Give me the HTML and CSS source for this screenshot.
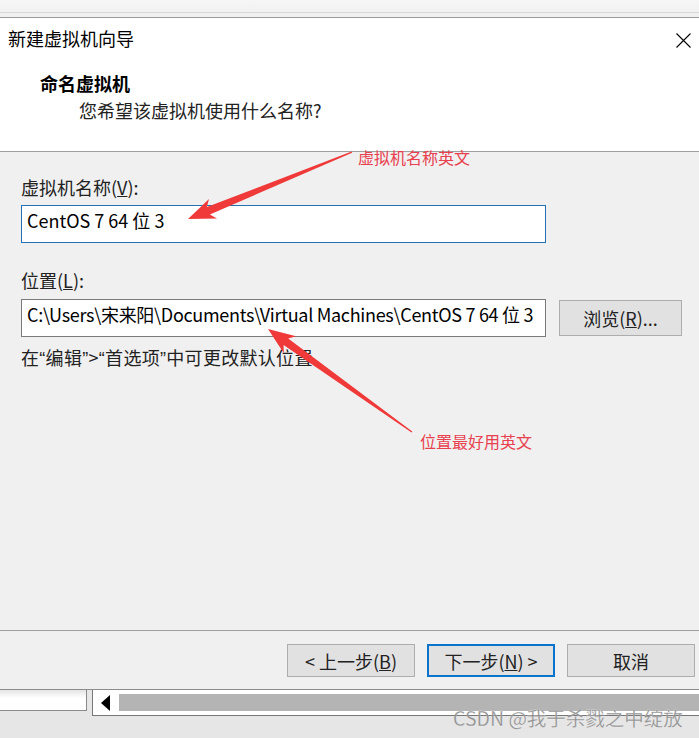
FILE: index.html
```html
<!DOCTYPE html>
<html lang="zh-CN">
<head>
<meta charset="utf-8">
<title>新建虚拟机向导</title>
<link rel="stylesheet" href="styles.css">
</head>
<body>
<div class="page">
  <div class="topstrip"><div class="topline"></div></div>
  <div class="dialog">
    <div class="titlebar">
      <span class="title">新建虚拟机向导</span>
      <svg class="close" width="15" height="15" viewBox="0 0 15 15"><path d="M0.5 0.5 L14.5 14.5 M14.5 0.5 L0.5 14.5" stroke="#000" stroke-width="1.1" fill="none"/></svg>
    </div>
    <div class="header">
      <div class="h-title">命名虚拟机</div>
      <div class="h-sub">您希望该虚拟机使用什么名称?</div>
    </div>
    <div class="body">
      <div class="label">虚拟机名称(<u>V</u>):</div>
      <div class="row">
        <div class="input focused">CentOS 7 64 位 3</div>
      </div>
      <div class="label label2">位置(<u>L</u>):</div>
      <div class="row">
        <div class="input plain">C:\Users\宋来阳\Documents\Virtual Machines\CentOS 7 64 位 3</div>
        <div class="btn browse">浏览(<u>R</u>)...</div>
      </div>
      <div class="hint">在<span class="q">“</span>编辑<span class="q">”</span>&gt;<span class="q">“</span>首选项<span class="q">”</span>中可更改默认位置。</div>
    </div>
    <div class="footer">
      <div class="btn fbtn">&lt; 上一步(<u>B</u>)</div>
      <div class="btn fbtn default">下一步(<u>N</u>) &gt;</div>
      <div class="btn fbtn">取消</div>
    </div>
  </div>
  <div class="under">
    <div class="whitebox"></div>
    <div class="scrollbar">
      <div class="sarrow"><svg width="9" height="16" viewBox="0 0 9 16"><path d="M9 0 L0 8 L9 16 Z" fill="#000"/></svg></div>
      <div class="thumb"></div>
    </div>
  </div>

  <svg class="arrows" width="699" height="738" viewBox="0 0 699 738">
    <polygon transform="translate(188,219) rotate(157.8)" fill="#f03a3a" points="0,0 -27,-10.5 -22,-4 -177,-0.6 -177,0.6 -22,4 -27,10.5"/>
    <polygon transform="translate(268,329) rotate(-144.4)" fill="#f03a3a" points="0,0 -27,-10.5 -22,-4 -177,-0.6 -177,0.6 -22,4 -27,10.5"/>
  </svg>
  <div class="note note1">虚拟机名称英文</div>
  <div class="note note2">位置最好用英文</div>
  <div class="watermark">CSDN @我于杀戮之中绽放</div>
</div>
</body>
</html>
```

FILE: styles.css
```css
* { box-sizing: border-box; }
html, body { margin: 0; padding: 0; }
body {
  background: #e6e6e6;
  font-family: "Noto Sans CJK SC", "Noto Sans", sans-serif;
  color: #111;
  width: 699px;
  height: 738px;
  overflow: hidden;
}
.page { position: relative; width: 699px; height: 738px; }
.topstrip {
  height: 18px;
  background: linear-gradient(#f6f6f6, #efefef);
  border-bottom: 1px solid #9a9a9a;
  padding-top: 12px;
}
.topline { height: 1px; background: #d6d6d6; }
.dialog { background: #fff; }
.titlebar {
  height: 44px;
  display: flex;
  align-items: center;
  justify-content: space-between;
  padding: 0 8px 4px 8px;
}
.title { font-size: 18px; line-height: 24px; color: #000; }
.close { display: block; margin-top: 4px; }
.header {
  padding: 9px 0 29px 40px;
  border-bottom: 1px solid #a0a0a0;
}
.h-title { font-size: 18px; font-weight: bold; line-height: 24px; color: #000; }
.h-sub { font-size: 18px; line-height: 24px; margin-top: 3px; padding-left: 39px; color: #222; }
.body {
  background: #f0f0f0;
  height: 478px;
  padding: 23px 0 0 21px;
}
.label { font-size: 18px; line-height: 24px; color: #222; margin-bottom: 6px; }
.label2 { margin-top: 25px; margin-bottom: 7px; }
.row { display: flex; align-items: center; gap: 13px; }
.input {
  width: 525px;
  height: 38px;
  background: #fff;
  font-size: 18px;
  line-height: 28px;
  padding-left: 5px;
  white-space: nowrap;
  overflow: hidden;
  color: #000;
}
.focused { border: 1px solid #2470b0; }
.plain { border: 1px solid #7a7a7a; letter-spacing: -0.3px; }
.btn {
  background: #e1e1e1;
  border: 1px solid #adadad;
  font-size: 18px;
  color: #222;
  display: flex;
  align-items: center;
  justify-content: center;
}
.browse { width: 123px; height: 36px; }
.hint { font-size: 18px; line-height: 24px; color: #222; margin-top: 8px; letter-spacing: 0.3px; }
.q { font-family: "Liberation Sans", sans-serif; }
.footer {
  background: #f0f0f0;
  border-top: 1px solid #a0a0a0;
  border-bottom: 1px solid #8c8c8c;
  height: 60px;
  display: flex;
  gap: 12px;
  padding: 13px 0 0 287px;
}
.fbtn { width: 128px; height: 33px; flex: none; }
.default { border: 2px solid #0a74cc; }
.under {
  display: flex;
  align-items: flex-start;
  gap: 5px;
  height: 49px;
}
.whitebox {
  width: 87px;
  height: 21px;
  background: linear-gradient(#e4e4e4, #fff 8px);
  border-right: 1px solid #8a8a8a;
  border-bottom: 1px solid #8a8a8a;
}
.scrollbar {
  flex: 1;
  height: 26px;
  background: #fff;
  border-left: 1px solid #777;
  border-bottom: 1px solid #777;
  display: flex;
  align-items: flex-start;
  padding-top: 4px;
}
.sarrow { width: 26px; height: 17px; display: flex; align-items: center; padding-left: 8px; }
.thumb { flex: 1; height: 17px; background: #b4b4b4; }
.arrows { position: absolute; left: 0; top: 0; pointer-events: none; }
.note {
  position: absolute;
  font-size: 16px;
  line-height: 20px;
  color: #e8404e;
}
.note1 { left: 358px; top: 147px; }
.note2 { left: 420px; top: 431px; }
.watermark {
  position: absolute;
  left: 453px;
  top: 706px;
  font-size: 19.5px;
  line-height: 24px;
  color: rgba(135,135,135,0.9);
  -webkit-text-stroke: 0.3px rgba(255,255,255,0.6);
}
```
